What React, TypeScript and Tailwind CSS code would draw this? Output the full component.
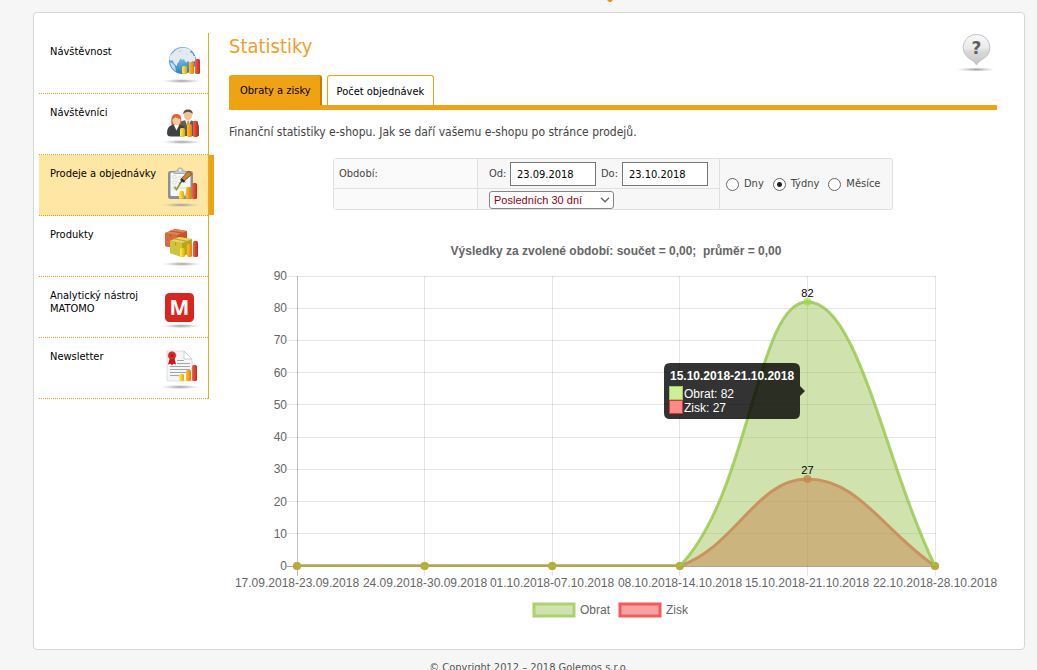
import React, { useId } from "react";

type Bar = { x: number; y: number };

function Shadow({ cx = 20, cy = 40 }: { cx?: number; cy?: number }) {
  const id = useId();
  return (
    <>
      <radialGradient id={id}>
        <stop offset="0" stopColor="#777" stopOpacity="0.75" />
        <stop offset="0.5" stopColor="#999" stopOpacity="0.4" />
        <stop offset="1" stopColor="#bbb" stopOpacity="0" />
      </radialGradient>
      <ellipse cx={cx} cy={cy} rx="20" ry="2.2" fill={`url(#${id})`} />
    </>
  );
}

function Bars({ bars, bottom }: { bars: Bar[]; bottom: number }) {
  const id = useId();
  const colors = [
    ["#fff04a", "#e3a800"],
    ["#ffc02c", "#e57f00"],
    ["#f4604a", "#c22a1c"],
  ];
  return (
    <>
      {bars.map((b, i) => (
        <g key={i}>
          <linearGradient id={`${id}${i}`} x1="0" x2="1">
            <stop offset="0" stopColor={colors[i][0]} />
            <stop offset="1" stopColor={colors[i][1]} />
          </linearGradient>
          <rect x={b.x} y={b.y} width="5" height={bottom - b.y} rx="1.5" fill={`url(#${id}${i})`} />
        </g>
      ))}
    </>
  );
}

function Icon({ children }: { children: React.ReactNode }) {
  return (
    <svg className="-mt-1 h-11 w-10 shrink-0" viewBox="0 0 40 44" aria-hidden="true">
      {children}
    </svg>
  );
}

function GlobeIcon() {
  return (
    <Icon>
      <defs>
        <radialGradient id="globe" cx="0.4" cy="0.3" r="0.8">
          <stop offset="0" stopColor="#8cc9f0" />
          <stop offset="0.6" stopColor="#4796cf" />
          <stop offset="1" stopColor="#2a73ad" />
        </radialGradient>
      </defs>
      <Shadow />
      <circle cx="20.5" cy="19.5" r="13.5" fill="url(#globe)" />
      <path d="M11 12c2-3 5.500-5 9.500-5.200 3 0 6 .6 8.500 2.500l-1 2 2.500 1 1 2.500 1.500.5.500 4-1.500 1.500-2-.5-1.500 3-2.500-3.500-2 2-2-3.500-2 .5-1.500-1.500-1.500 3-1.500 2-1 3-2.500-3-1.500-3-2.500.5-1-1.500c.4-2.800 2-5 4-6.500z" fill="#e4ebf0" />
      <path d="M8 21l3 1.500 2 3 1 5c-3-2-5.500-5-6-9.500z" fill="#c9dfee" />
      <path d="M17 9l3 .5-1 1.500-2.500.5zM24 12l2 1-1 1.500z" fill="#c3dbea" />
      <Bars bars={[{ x: 20, y: 25 }, { x: 27, y: 21 }, { x: 33, y: 18 }]} bottom={33} />
    </Icon>
  );
}

function PeopleIcon() {
  return (
    <Icon>
      <Shadow />
      <path d="M15 34V25q0-4 5-6l4-1h4l5 2q4 1 4 5v9z" fill="#5c5f62" />
      <path d="M23 18l3 8 3-8z" fill="#f2f2f2" />
      <path d="M25.500 19h1.500l.8 5-1.500 3-1.500-3z" fill="#b9a31c" />
      <ellipse cx="26" cy="13.500" rx="4" ry="5" fill="#f0c49a" />
      <path d="M21.500 12.500c-.6-3.500 1.300-5 4.500-5s5.200 1.500 4.500 5c-1-2-2.500-2.500-4.500-2.500s-3.500.5-4.500 2.500z" fill="#6b513a" />
      <path d="M9.500 23C8.500 15 10.500 12 14.500 12S20 15 19 23z" fill="#d9602a" />
      <path d="M5 31q0-6 4-7.500l3-1.500h5l3 1.500q3 1 3 5v3q0 3-4 3H9q-4 0-4-3.500z" fill="#3f4245" />
      <path d="M11.500 22.500l3 6 3-6z" fill="#fafafa" />
      <ellipse cx="14.500" cy="18.500" rx="4" ry="4.800" fill="#f6cba4" />
      <path d="M10.300 17c0-3.500 1.700-4.500 4-4.500s4.300 1 4.300 4.500c-2.500-.2-4-1-5-2-.8 1.200-1.800 1.800-3.300 2z" fill="#e0682f" />
      <Bars bars={[{ x: 18, y: 26 }, { x: 25, y: 22 }, { x: 31, y: 19 }]} bottom={35} />
    </Icon>
  );
}

function ClipboardIcon() {
  return (
    <Icon>
      <Shadow cx={19} cy={42} />
      <rect x="6" y="8" width="25" height="28" rx="2.500" fill="#8b9094" />
      <rect x="8.500" y="9.500" width="20" height="23.500" rx="1" fill="#f7f7f8" />
      <path d="M21 33l7.500-7v7z" fill="#c9cbcd" />
      <path d="M12 10.500c0-2 1-2.500 3.500-2.700.2-2 1-2.800 2.700-2.800s2.500.8 2.700 2.800c2.500.2 3.500.7 3.500 2.700z" fill="#c9cccf" stroke="#94989c" strokeWidth="0.7" />
      <circle cx="18.200" cy="7.300" r="1" fill="#fff" />
      {[14, 19.5, 25].map((y) => (
        <g key={y} fill="none" stroke="#d2d4d6" strokeWidth="0.8">
          <circle cx="12.500" cy={y} r="1.800" />
          <path d={`M16 ${y}h8`} />
        </g>
      ))}
      <path d="M12.500 24l2 2.500 4-6.500" fill="none" stroke="#9b9a1a" strokeWidth="1.600" />
      <path d="M17 21.500l3.500-6 2 1.500z" fill="#3c3c3c" />
      <path d="M19.500 15.500l6-6.500q1.500-1 3 .4t.2 3l-6.500 5.600z" fill="#c9822e" stroke="#6f451a" strokeWidth="0.800" />
      <path d="M19.300 15l4 3.200-1.800 1.300-3.300-2.500z" fill="#2e2e2e" />
      <Bars bars={[{ x: 17, y: 28 }, { x: 24, y: 24 }, { x: 30, y: 20 }]} bottom={36} />
    </Icon>
  );
}

function BoxesIcon() {
  return (
    <Icon>
      <Shadow />
      <path d="M3 9l10-4 12 2v13l-10 5-12-3z" fill="#c9512b" />
      <path d="M3 9l10-4 12 2-10 4z" fill="#e58258" />
      <path d="M3 9l12 2v14L3 22z" fill="#d96a40" />
      <path d="M8 7l12 1.800M8.500 10v3" fill="none" stroke="#c4552e" strokeWidth="1.200" />
      <path d="M8 17l9-4 13 2v13l-10 5-12-4z" fill="#b7a51e" />
      <path d="M8 17l9-4 13 2-10 4z" fill="#e3d866" />
      <path d="M8 17l12 2v14L8 29z" fill="#d0c43a" />
      <path d="M12.500 15l12 2M13.500 18v4" fill="none" stroke="#b5a726" strokeWidth="1.200" />
      <Bars bars={[{ x: 18, y: 24 }, { x: 25, y: 20 }, { x: 31, y: 17 }]} bottom={33} />
    </Icon>
  );
}

function MatomoIcon() {
  return (
    <Icon>
      <Shadow cx={19} cy={41} />
      <rect x="3" y="8" width="29" height="29" rx="4.500" fill="#d8261f" />
      <text x="17.500" y="30" textAnchor="middle" fill="#fff" className="font-['Open_Sans',sans-serif] text-[21px] font-bold">
        M
      </text>
    </Icon>
  );
}

function NewsletterIcon() {
  return (
    <Icon>
      <Shadow cx={18} cy={41} />
      <path d="M5 5h17l8 8v22H5z" fill="#f4f5f6" stroke="#d5d7d9" strokeWidth="0.800" />
      <path d="M22 5v8h8z" fill="#fff" stroke="#c3c5c7" strokeWidth="0.800" />
      <path d="M15 14.500h7M15 17.500h13M8 20.500h20M8 23.500h20M8 26.500h18M8 29.500h14" stroke="#a3a6a9" strokeWidth="1" />
      <path d="M8 12l-2 6.500 2.500-.8 1.500 1.500 1.500-1.500 2.500.8L12.500 12z" fill="#c41a1a" />
      <circle cx="10" cy="9.500" r="3.800" fill="#e02a25" stroke="#c41a1a" strokeWidth="0.800" strokeDasharray="1.200 0.800" />
      <circle cx="10" cy="9.500" r="1.600" fill="#b81414" />
      <Bars bars={[{ x: 17, y: 28 }, { x: 24, y: 24 }, { x: 30, y: 19 }]} bottom={35} />
    </Icon>
  );
}

const menu = [
  { label: "Návštěvnost", icon: <GlobeIcon /> },
  { label: "Návštěvníci", icon: <PeopleIcon /> },
  { label: "Prodeje a objednávky", icon: <ClipboardIcon />, active: true },
  { label: "Produkty", icon: <BoxesIcon /> },
  { label: "Analytický nástroj MATOMO", icon: <MatomoIcon /> },
  { label: "Newsletter", icon: <NewsletterIcon /> },
];

function Sidebar() {
  return (
    <nav className="w-[170px] shrink-0 self-start border-r border-r-[#efa71c] text-[11px] leading-[13px] text-black">
      {menu.map((m) => (
        <a
          key={m.label}
          href="#"
          className={
            "flex h-[61px] justify-between border-b border-dotted border-b-[#f0a000] pt-3 pr-[6px] pl-[11px] " +
            (m.active ? "relative bg-[#fee7a5] after:absolute after:top-0 after:-right-[6px] after:h-full after:w-[5px] after:bg-[#efa312]" : "")
          }
        >
          <span className={m.active ? "-mr-3 whitespace-nowrap" : ""}>{m.label}</span>
          {m.icon}
        </a>
      ))}
    </nav>
  );
}

function HelpPin() {
  return (
    <a href="#" aria-label="Nápověda" className="mr-1 block">
      <svg className="h-[42px] w-9" viewBox="0 0 36 42" aria-hidden="true">
        <defs>
          <linearGradient id="pin" x1="0" x2="0" y1="0" y2="1">
            <stop offset="0" stopColor="#fafafa" />
            <stop offset="0.45" stopColor="#e9e9e9" />
            <stop offset="0.55" stopColor="#dadada" />
            <stop offset="1" stopColor="#c4c4c4" />
          </linearGradient>
        </defs>
        <Shadow cx={19} cy={36.5} />
        <path d="M19.500 1.500a13 13 0 0 1 8 23.500c-3 2-6 3.500-8 7-2-3.500-5-5-8-7a13 13 0 0 1 8-23.500z" fill="url(#pin)" stroke="#c4c4c4" />
        <text x="19.500" y="20.500" textAnchor="middle" fill="#5e5e5e" className="font-['DejaVu_Sans',sans-serif] text-[17px] font-bold">
          ?
        </text>
      </svg>
    </a>
  );
}

function Filter() {
  const field = "h-6 w-[86px] border border-[#767676] bg-white px-[6px] pt-px text-[11px] text-black";
  return (
    <form className="mx-auto mt-[18px] flex w-[560px] rounded-[3px] border border-[#e0e0e0] bg-[#f7f7f7] text-[11px] text-[#444]">
      <div className="w-[143px] bg-[#fafafa]">
        <div className="flex h-[30px] items-center border-b border-[#e0e0e0] pt-px pl-[5px]">Období:</div>
      </div>
      <div className="w-[243px] border-x border-[#e0e0e0]">
        <div className="flex h-[30px] items-center border-b border-[#e0e0e0] pl-[11px]">
          <label htmlFor="from" className="w-[21px] pt-px">Od:</label>
          <input id="from" className={field} defaultValue="23.09.2018" />
          <label htmlFor="to" className="ml-[5px] w-[21px] pt-px">Do:</label>
          <input id="to" className={field} defaultValue="23.10.2018" />
        </div>
        <div className="flex h-5 items-end pl-[11px]">
          <div className="relative">
            <select
              aria-label="Období"
              className="block h-[18px] w-[125px] appearance-none rounded-[3px] border border-[#858585] bg-white pl-1 font-['Liberation_Sans',sans-serif] text-[11px] leading-4 text-[#900018]"
            >
              <option>Posledních 30 dní</option>
            </select>
            <svg className="pointer-events-none absolute top-[6px] right-1 h-[6px] w-[10px]" viewBox="0 0 10 6" aria-hidden="true">
              <path d="M1 .8l4 4 4-4" fill="none" stroke="#666" strokeWidth="1.500" />
            </svg>
          </div>
        </div>
      </div>
      <div className="flex flex-1 items-center gap-[9px] pt-px pl-[6px]">
        {["Dny", "Týdny", "Měsíce"].map((l) => (
          <label key={l} className="flex items-center gap-[5px]">
            <input
              type="radio"
              name="unit"
              defaultChecked={l === "Týdny"}
              className="h-[13px] w-[13px] appearance-none rounded-full border border-[#666] bg-white checked:bg-[radial-gradient(circle,#222_2px,transparent_3px)]"
            />
            {l}
          </label>
        ))}
      </div>
    </form>
  );
}

const weeks = [
  "17.09.2018-23.09.2018",
  "24.09.2018-30.09.2018",
  "01.10.2018-07.10.2018",
  "08.10.2018-14.10.2018",
  "15.10.2018-21.10.2018",
  "22.10.2018-28.10.2018",
];
const turnover = [0, 0, 0, 0, 82, 0];
const profit = [0, 0, 0, 0, 27, 0];

const TOP = 12;
const BOTTOM = 302;
const px = (i: number) => 68 + i * 127.6;
const py = (v: number) => BOTTOM - (v * (BOTTOM - TOP)) / 90;

function curve(values: number[]) {
  const pts = values.map((v, i) => ({ x: px(i), y: py(v) }));
  const cap = (y: number) => Math.min(BOTTOM, Math.max(TOP, y));
  const controls = pts.map((c, i) => {
    const p = pts[i - 1] ?? c;
    const n = pts[i + 1] ?? c;
    const before = Math.hypot(c.x - p.x, c.y - p.y);
    const after = Math.hypot(n.x - c.x, n.y - c.y);
    const a = (0.4 * before) / (before + after);
    const b = (0.4 * after) / (before + after);
    return {
      inX: c.x - a * (n.x - p.x),
      inY: cap(c.y - a * (n.y - p.y)),
      outX: c.x + b * (n.x - p.x),
      outY: cap(c.y + b * (n.y - p.y)),
    };
  });
  return pts
    .map((p, i) =>
      i === 0
        ? `M${p.x} ${p.y}`
        : `C${controls[i - 1].outX} ${controls[i - 1].outY} ${controls[i].inX} ${controls[i].inY} ${p.x} ${p.y}`
    )
    .join("");
}

function Series({ values, fill, line, dot }: { values: number[]; fill: string; line: string; dot: string }) {
  const d = curve(values);
  return (
    <g>
      <path d={`${d}V${BOTTOM}H${px(0)}Z`} fill={fill} />
      <path d={d} fill="none" stroke={line} strokeWidth="3" clipPath="url(#plot)" />
      {values.map((v, i) => (
        <circle key={i} cx={px(i)} cy={py(v)} r="4" fill={dot} />
      ))}
    </g>
  );
}

function Chart() {
  return (
    <svg className="block w-full overflow-visible font-['Liberation_Sans',sans-serif] text-[12px]" viewBox="0 0 768 330" role="img" aria-label="Obrat a zisk po týdnech">
      <clipPath id="plot">
        <rect x="67" y="10" width="641" height="293" />
      </clipPath>
      <g shapeRendering="crispEdges" stroke="#000" strokeOpacity="0.1">
        {[0, 10, 20, 30, 40, 50, 60, 70, 80, 90].map((v) => (
          <path key={v} d={`M58 ${Math.floor(py(v)) + 0.5}H707`} strokeOpacity={v === 0 ? 0.35 : 0.1} />
        ))}
        {weeks.map((w, i) => (
          <path key={w} d={`M${Math.floor(px(i)) + 0.5} 12V312`} strokeOpacity={i === 0 ? 0.25 : 0.1} />
        ))}
      </g>
      <g fill="#666">
        {[0, 10, 20, 30, 40, 50, 60, 70, 80, 90].map((v) => (
          <text key={v} x="58" y={Math.round(py(v)) + 4} textAnchor="end">
            {v}
          </text>
        ))}
        {weeks.map((w, i) => (
          <text key={w} x={Math.round(px(i))} y="323" textAnchor="middle">
            {w}
          </text>
        ))}
      </g>
      <Series values={profit} fill="rgba(237,65,65,0.5)" line="#f35d5f" dot="rgba(235,70,60,0.8)" />
      <Series values={turnover} fill="rgba(161,200,93,0.5)" line="rgba(145,196,65,0.75)" dot="rgba(145,220,40,0.55)" />
      <g fill="#000" textAnchor="middle" className="text-[11px]">
        <text x={px(4)} y="33">82</text>
        <text x={px(4)} y="210">27</text>
      </g>
      <g>
        <path d="M441 99H565q6 0 6 6v17l5 5-5 5v17q0 6-6 6H441q-6 0-6-6V105q0-6 6-6z" fill="#000" fillOpacity="0.8" />
        <rect x="440.500" y="122.500" width="13" height="13" fill="#ceef94" stroke="#a2c85d" />
        <rect x="440.500" y="136.500" width="13" height="13" fill="#ff8a8a" stroke="#d33" />
        <g fill="#fff">
          <text x="441" y="116" className="font-bold">15.10.2018-21.10.2018</text>
          <text x="455" y="134">Obrat: 82</text>
          <text x="455" y="148">Zisk: 27</text>
        </g>
      </g>
    </svg>
  );
}

function Legend() {
  const items = [
    { label: "Obrat", fill: "#d0e3ae", line: "#abd26f" },
    { label: "Zisk", fill: "#f7a1a3", line: "#f05c5e" },
  ];
  return (
    <ul className="mt-2 flex justify-center gap-2 pr-[6px] font-['Liberation_Sans',sans-serif] text-[12px] leading-4 text-[#666]">
      {items.map((l) => (
        <li key={l.label} className="flex items-center gap-1">
          <svg className="h-4 w-11" viewBox="0 0 44 16" aria-hidden="true">
            <rect x="2" y="2" width="40" height="12" fill={l.fill} stroke={l.line} strokeWidth="3" />
          </svg>
          {l.label}
        </li>
      ))}
    </ul>
  );
}

export default function App() {
  return (
    <div className="min-h-screen bg-[#f6f6f6] font-['DejaVu_Sans_Condensed','DejaVu_Sans',sans-serif]">
      <header className="flex h-3 items-start justify-center pl-[183px]">
        <svg className="h-[2px] w-[6px]" viewBox="0 0 6 2" aria-hidden="true">
          <path d="M0 0h6L4 2H2z" fill="#e09a12" />
        </svg>
      </header>
      <div className="mr-3 ml-[33px] flex rounded border border-[#d6d6d6] bg-white pt-5 pb-[31px] pl-[5px]">
        <Sidebar />
        <main className="ml-5 min-w-0 flex-1 pr-[27px]">
          <div className="flex h-[42px] justify-between">
            <h1 className="text-[20px] leading-[26px] text-[#efa02a]">Statistiky</h1>
            <HelpPin />
          </div>
          <div className="flex gap-[5px] border-b-[5px] border-[#efa312] text-[11px] text-black">
            <button className="h-[30px] rounded-t-[3px] border-r-2 border-[#c47f0a] bg-[#efa312] pt-[3px] pr-[9px] pl-[11px]">Obraty a zisky</button>
            <button className="h-[30px] rounded-t-[3px] border border-b-0 border-[#efa312] bg-white px-[9px] pt-[3px]">Počet objednávek</button>
          </div>
          <p className="mt-[14px] text-[12px] leading-4 text-[#444]">
            Finanční statistiky e-shopu. Jak se daří vašemu e-shopu po stránce prodejů.
          </p>
          <Filter />
          <h2 className="mt-[33px] mb-[5px] pl-[6px] text-center font-['Liberation_Sans',sans-serif] text-[12px] leading-4 font-bold text-[#666]">
            Výsledky za zvolené období: součet = 0,00;&nbsp; průměr = 0,00
          </h2>
          <Chart />
          <Legend />
        </main>
      </div>
      <footer className="pt-[11px] pb-4 text-center text-[11px] leading-[14px] text-[#555]">
        <p className="pl-[21px]">© Copyright 2012 – 2018 Golemos s.r.o.</p>
      </footer>
    </div>
  );
}
